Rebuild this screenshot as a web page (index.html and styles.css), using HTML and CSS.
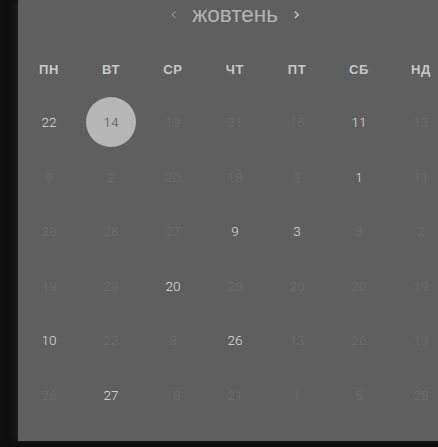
FILE: index.html
```html
<!DOCTYPE html>
<html lang="uk">
<head>
  <meta charset="UTF-8">
  <title>Календар</title>
  <meta name="viewport" content="width=device-width, initial-scale=1.0">
  <link rel="stylesheet" href="styles.css">
</head>
<body>
  <div class="panel">
    <header class="month">
      <span class="arrow prev">&#8249;</span>
      <span class="title">жовтень</span>
      <span class="arrow next">&#8250;</span>
    </header>
    <div class="weekdays">
      <span>ПН</span><span>ВТ</span><span>СР</span><span>ЧТ</span><span>ПТ</span><span>СБ</span><span>НД</span>
    </div>
    <div class="days">
      <span class="on">22</span><span class="today"><b>14</b></span><span>19</span><span>31</span><span>16</span><span class="on">11</span><span>13</span>
      <span>9</span><span>2</span><span>20</span><span>18</span><span>3</span><span class="on">1</span><span>11</span>
      <span>28</span><span>28</span><span>27</span><span class="on">9</span><span class="on">3</span><span>3</span><span>2</span>
      <span>19</span><span>29</span><span class="on">20</span><span>28</span><span>20</span><span>30</span><span>19</span>
      <span class="on">10</span><span>23</span><span>8</span><span class="on">26</span><span>13</span><span>26</span><span>19</span>
      <span>26</span><span class="on">27</span><span>18</span><span>21</span><span>1</span><span>5</span><span>28</span>
    </div>
  </div>
</body>
</html>
```

FILE: styles.css
```css
html, body {
  margin: 0;
  padding: 0;
  height: 100%;
  overflow: hidden;
}
body {
  background: #0e0e0e;
  font-family: 'Roboto', 'Liberation Sans', sans-serif;
}
.panel {
  margin-left: 18px;
  width: 434px;
  height: 441px;
  background: #5f5f5f;
  box-shadow: -4px 0 6px rgba(30,30,30,0.8);
}
.month {
  height: 30px;
  display: flex;
  justify-content: center;
  align-items: center;
  gap: 15px;
}
.title {
  font-family: 'Liberation Sans', sans-serif;
  font-size: 22.5px;
  color: #b4b4b4;
  line-height: 30px;
}
.arrow {
  font-family: 'DejaVu Sans', sans-serif;
  font-size: 18px;
  line-height: 30px;
  margin-top: -3px;
}
.prev { color: #8a8a8a; }
.next { color: #c8c8c8; }
.weekdays {
  margin-top: 24px;
  height: 30px;
  display: grid;
  grid-template-columns: repeat(7, 62px);
  align-items: center;
}
.weekdays span {
  text-align: center;
  font-family: 'Liberation Sans', sans-serif;
  font-weight: bold;
  font-size: 13px;
  letter-spacing: 0.6px;
  color: #c8c8c8;
}
.days {
  margin-top: 10.7px;
  display: grid;
  grid-template-columns: repeat(7, 62px);
  grid-auto-rows: 54.6px;
}
.days span {
  display: flex;
  justify-content: center;
  align-items: center;
  font-size: 13.5px;
  font-weight: 300;
  color: #6e6e6e;
}
.days .on {
  color: #dedede;
}
.days .today b {
  width: 50px;
  height: 50px;
  border-radius: 50%;
  background: #b6b6b6;
  color: #505050;
  font-weight: 300;
  display: flex;
  justify-content: center;
  align-items: center;
}
```
